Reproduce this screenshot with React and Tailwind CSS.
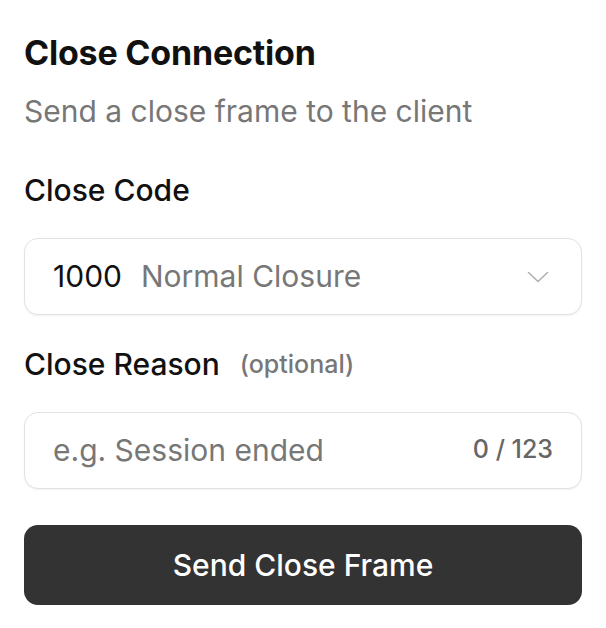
export default function App() {
  return (
    <div className="min-h-screen bg-white font-['Inter',sans-serif] text-[#111]">
      <div className="px-6 pt-[33px] pb-6">
        <h1 className="text-[34px] leading-[40px] font-bold tracking-[-0.2px]">Close Connection</h1>
        <p className="mt-[18px] text-[30px] leading-[40px] text-[#777]">
          Send a close frame to the client
        </p>

        <label className="block mt-[39px] text-[30px] leading-[40px] font-medium">Close Code</label>
        <button className="mt-[28px] w-full h-[77px] flex items-center justify-between rounded-[14px] border border-[#e2e2e2] bg-white pl-7 pr-8 shadow-[0_1px_2px_rgba(0,0,0,0.06)]">
          <span className="flex items-baseline gap-[19px]">
            <span className="text-[30px] text-[#111]">1000</span>
            <span className="text-[30px] text-[#777]">Normal Closure</span>
          </span>
          <svg width="22" height="12" viewBox="0 0 22 12" fill="none" className="text-[#b0b0b0]">
            <path d="M1.5 1.5 L11 10.5 L20.5 1.5" stroke="currentColor" strokeWidth="1.6" strokeLinecap="round" strokeLinejoin="round" />
          </svg>
        </button>

        <div className="flex items-center gap-5 mt-[29px] h-[40px]">
          <label className="text-[30px] leading-[40px] font-medium">Close Reason</label>
          <span className="text-[25px] leading-[40px] font-medium text-[#777]">(optional)</span>
        </div>
        <div className="mt-[28px] w-full h-[77px] flex items-center justify-between rounded-[14px] border border-[#e2e2e2] bg-white pl-7 pr-7 shadow-[0_1px_2px_rgba(0,0,0,0.06)]">
          <input
            placeholder="e.g. Session ended"
            className="flex-1 min-w-0 bg-transparent text-[30px] text-[#111] placeholder-[#777] outline-none"
          />
          <span className="text-[25px] font-medium text-[#666] -translate-y-px">0 / 123</span>
        </div>

        <button className="mt-[36px] w-full h-[80px] rounded-[14px] bg-[#333] text-white text-[30px] font-medium">
          Send Close Frame
        </button>
      </div>
    </div>
  );
}
